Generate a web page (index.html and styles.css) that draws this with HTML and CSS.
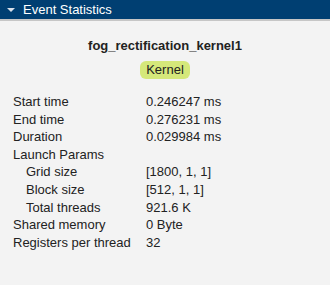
FILE: index.html
```html
<!DOCTYPE html>
<html lang="en">
<head>
  <meta charset="UTF-8" />
  <title>Event Statistics</title>
  <link rel="stylesheet" href="styles.css">
</head>
<body>
  <div class="header">
    <span class="caret"></span>
    <span>Event Statistics</span>
  </div>

  <div class="panel">
    <div class="kernel-name">fog_rectification_kernel1</div>
    <div class="badge-row"><span class="badge">Kernel</span></div>

    <div class="stats">
      <div class="label">Start time</div><div>0.246247 ms</div>
      <div class="label">End time</div><div>0.276231 ms</div>
      <div class="label">Duration</div><div>0.029984 ms</div>
      <div class="label">Launch Params</div><div></div>
      <div class="label sub">Grid size</div><div>[1800, 1, 1]</div>
      <div class="label sub">Block size</div><div>[512, 1, 1]</div>
      <div class="label sub">Total threads</div><div>921.6 K</div>
      <div class="label">Shared memory</div><div>0 Byte</div>
      <div class="label">Registers per thread</div><div>32</div>
    </div>
  </div>
</body>
</html>
```

FILE: styles.css
```css
body {
  margin: 0;
  font-family: "Liberation Sans", Arial, sans-serif;
  background-color: #f3f3f3;
  color: #222;
  height: 285px;
}
.header {
  display: flex;
  align-items: center;
  gap: 8px;
  height: 19px;
  padding-left: 7px;
  background-color: #003f72;
  color: white;
  font-size: 13px;
  border-bottom: 2px solid #c6c6c6;
}
.caret {
  width: 0;
  height: 0;
  border-left: 4px solid transparent;
  border-right: 4px solid transparent;
  border-top: 4px solid #d8e0ea;
  margin-top: 1px;
}
.panel {
  padding: 17px 13px 0 13px;
}
.kernel-name {
  text-align: center;
  font-weight: bold;
  font-size: 13px;
  line-height: 16px;
}
.badge-row {
  text-align: center;
  margin-top: 6px;
}
.badge {
  display: inline-block;
  background-color: #d5e87a;
  border-radius: 6px;
  padding: 1px 6px;
  font-size: 13px;
  line-height: 16px;
}
.stats {
  display: grid;
  grid-template-columns: 133px auto;
  margin-top: 14px;
  font-size: 13px;
  line-height: 17.6px;
}
.label.sub {
  padding-left: 13px;
}
```
